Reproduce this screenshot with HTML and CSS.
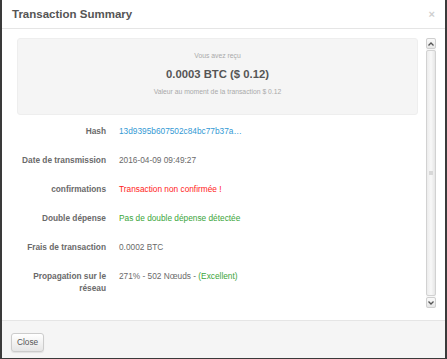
FILE: index.html
```html
<!DOCTYPE html>
<html lang="fr">
<head>
    <meta charset="UTF-8">
    <meta name="viewport" content="width=device-width, initial-scale=1.0">
    <title>Transaction Summary</title>
    <link rel="stylesheet" href="styles.css">
</head>
<body>
    <div class="modal">
        <div class="modal-header">
            <h3 class="modal-title">Transaction Summary</h3>
            <span class="close-x">&times;</span>
        </div>

        <div class="modal-body">
            <div class="scroll-content">
                <div class="well">
                    <p class="well-label">Vous avez reçu</p>
                    <p class="well-amount">0.0003 BTC ($ 0.12)</p>
                    <p class="well-label well-note">Valeur au moment de la transaction $ 0.12</p>
                </div>

                <div class="detail-row">
                    <div class="detail-label">Hash</div>
                    <div class="detail-value link">13d9395b607502c84bc77b37a…</div>
                </div>
                <div class="detail-row">
                    <div class="detail-label">Date de transmission</div>
                    <div class="detail-value">2016-04-09 09:49:27</div>
                </div>
                <div class="detail-row">
                    <div class="detail-label">confirmations</div>
                    <div class="detail-value danger">Transaction non confirmée !</div>
                </div>
                <div class="detail-row">
                    <div class="detail-label">Double dépense</div>
                    <div class="detail-value success">Pas de double dépense détectée</div>
                </div>
                <div class="detail-row">
                    <div class="detail-label">Frais de transaction</div>
                    <div class="detail-value">0.0002 BTC</div>
                </div>
                <div class="detail-row">
                    <div class="detail-label">Propagation sur le réseau</div>
                    <div class="detail-value">271% - 502 Nœuds - <span class="success">(Excellent)</span></div>
                </div>
            </div>

            <div class="scrollbar">
                <div class="scroll-btn">
                    <svg width="6" height="4" viewBox="0 0 6 4"><polyline points="0.5,3.5 3,1 5.5,3.5" fill="none" stroke="#555" stroke-width="1.3"/></svg>
                </div>
                <div class="scroll-thumb"><span class="grip"></span></div>
                <div class="scroll-btn">
                    <svg width="6" height="4" viewBox="0 0 6 4"><polyline points="0.5,0.5 3,3 5.5,0.5" fill="none" stroke="#555" stroke-width="1.3"/></svg>
                </div>
            </div>
        </div>

        <div class="modal-footer">
            <button class="btn">Close</button>
        </div>
    </div>
</body>
</html>
```

FILE: styles.css
```css
body {
    font-family: "Liberation Sans", Arial, sans-serif;
    background-color: #fff;
    margin: 0;
    padding: 0;
}

.modal {
    width: 447px;
    box-sizing: border-box;
    border: 2px solid #3a3a3a;
    border-top: none;
    background-color: #fff;
}

.modal-header {
    display: flex;
    justify-content: space-between;
    align-items: center;
    padding: 8px 10px 7px 10px;
    border-bottom: 1px solid #e5e5e5;
}

.modal-title {
    margin: 0;
    font-size: 11.5px;
    line-height: 13px;
    font-weight: bold;
    color: #555;
}

.close-x {
    font-size: 11px;
    line-height: 13px;
    font-weight: bold;
    color: #cfcfcf;
}

.modal-body {
    display: flex;
    gap: 8px;
    padding: 9px 9px 12px 15px;
}

.scroll-content {
    flex: 1;
    height: 270px;
    overflow: hidden;
}

.well {
    background-color: #f5f5f5;
    border: 1px solid #eeeeee;
    border-radius: 3px;
    padding: 12px 10px 17px;
    margin-bottom: 9.5px;
    text-align: center;
}

.well p {
    margin: 0;
}

.well-label {
    font-size: 6.8px;
    line-height: 10px;
    color: #aaa;
}

.well-amount {
    font-size: 11.3px;
    line-height: 14px;
    font-weight: bold;
    color: #555;
    margin-top: 6px !important;
}

.well-note {
    margin-top: 6px !important;
}

.detail-row {
    display: grid;
    grid-template-columns: 89px 1fr;
    column-gap: 13px;
    font-size: 8.3px;
    line-height: 12.5px;
    margin-bottom: 16.5px;
}

.detail-label {
    text-align: right;
    font-weight: bold;
    color: #6a6a6a;
}

.detail-value {
    color: #6a6a6a;
}

.link {
    color: #3399d4;
}

.danger {
    color: #f22;
}

.success {
    color: #3aa53a;
}

/* fake scrollbar, old style */
.scrollbar {
    width: 10px;
    height: 270px;
    display: flex;
    flex-direction: column;
    gap: 1px;
    background-color: #f7f7f7;
}

.scroll-btn {
    height: 11px;
    box-sizing: border-box;
    border: 1px solid #cfcfcf;
    border-radius: 2px;
    background: linear-gradient(#fafafa, #e6e6e6);
    display: flex;
    align-items: center;
    justify-content: center;
}

.scroll-thumb {
    flex: 1;
    box-sizing: border-box;
    border: 1px solid #d2d2d2;
    border-radius: 2px;
    background: linear-gradient(to right, #ececec, #f8f8f8 50%, #e6e6e6);
    display: flex;
    align-items: center;
    justify-content: center;
}

.grip {
    width: 4px;
    height: 4px;
    background-color: #d8d8d8;
}

.modal-footer {
    padding: 10px 9px 6px;
    border-top: 1px solid #e5e5e5;
    background-color: #f5f5f5;
}

.btn {
    font-family: "Liberation Sans", Arial, sans-serif;
    font-size: 8.3px;
    height: 19px;
    padding: 0 5px;
    color: #555;
    background: linear-gradient(#fff, #e6e6e6);
    border: 1px solid #ccc;
    border-radius: 3px;
    box-shadow: 0 1px 1px rgba(0, 0, 0, 0.08);
}
```
